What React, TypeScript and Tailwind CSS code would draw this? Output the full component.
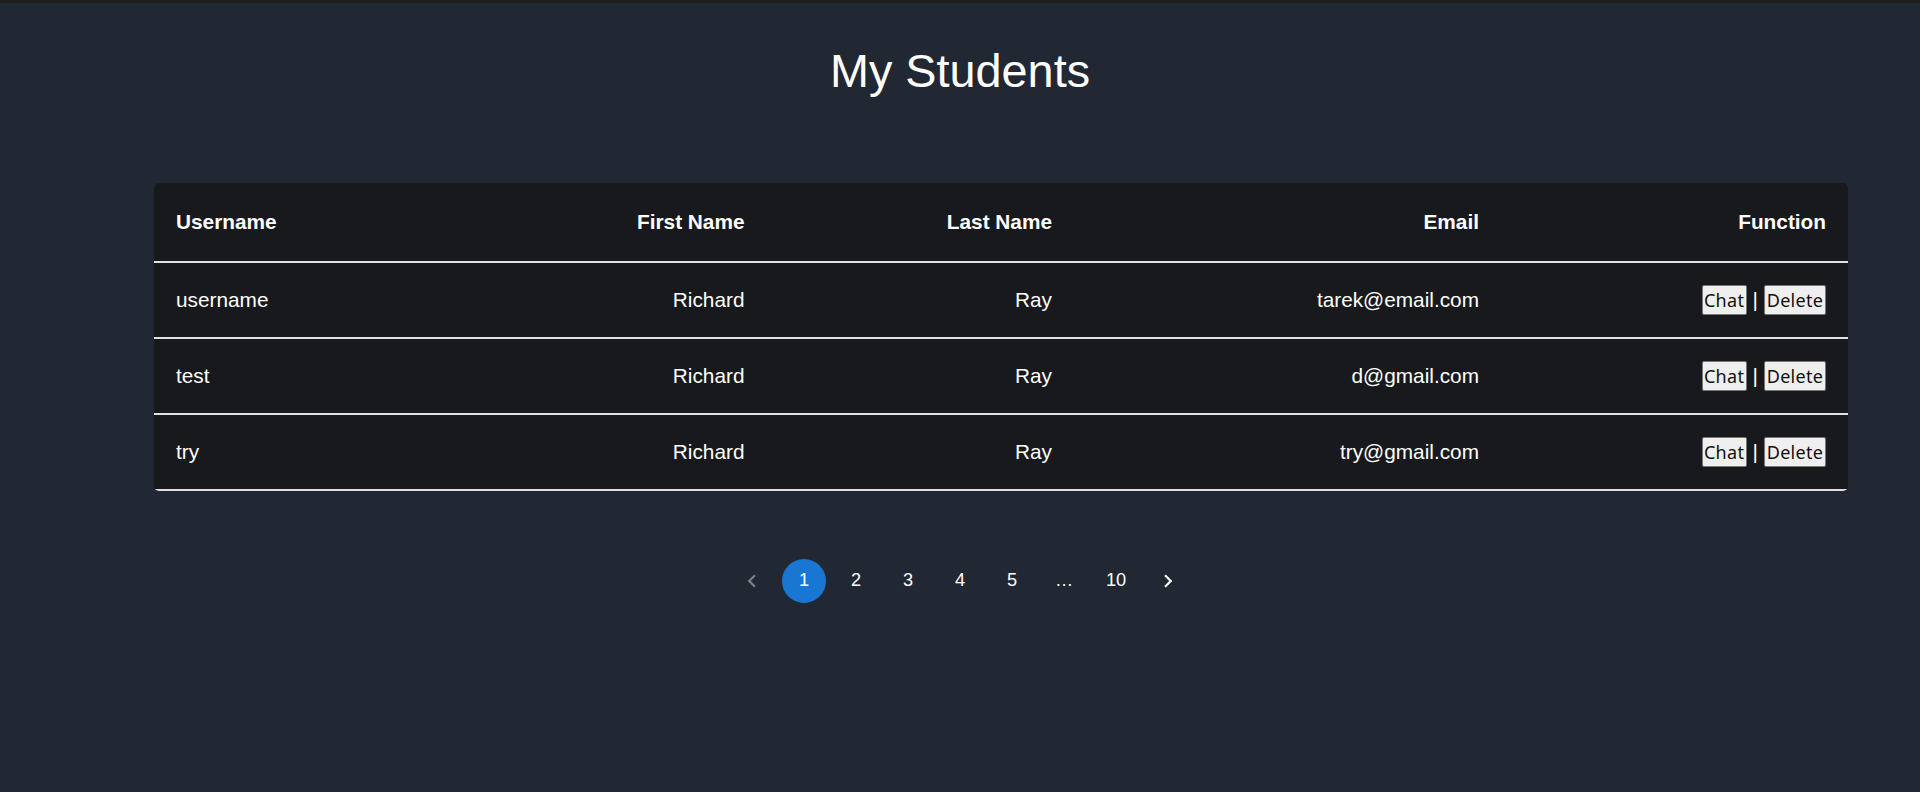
import React from "react";

const rows = [
  { username: "username", first: "Richard", last: "Ray", email: "tarek@email.com" },
  { username: "test", first: "Richard", last: "Ray", email: "d@gmail.com" },
  { username: "try", first: "Richard", last: "Ray", email: "try@gmail.com" },
];

const cols = "grid grid-cols-[300px_312.5px_307.5px_427px_347px]";

function Btn({ children, w }: { children: React.ReactNode; w: string }) {
  return (
    <button
      className={`${w} h-[30px] flex items-center justify-center bg-[#efefef] border border-[#767676] rounded-[2px] text-[#111] text-[18px] tracking-[0.3px] leading-none`}
      style={{ fontFamily: '"Noto Sans", "Open Sans", sans-serif' }}
    >
      {children}
    </button>
  );
}

export default function App() {
  return (
    <div
      className="min-h-screen bg-[#222833] text-white"
      style={{ fontFamily: '"Liberation Sans", Arial, sans-serif' }}
    >
      <div className="h-[3px] bg-[#1e1e1e]" />
      <h1 className="mt-[41px] text-center text-[46.8px] leading-[54px] font-normal">My Students</h1>

      <div className="mt-[85px] ml-[154px] w-[1694px] bg-[#18191d] rounded-[5px] overflow-hidden">
        <div className={`${cols} h-[80px] border-b-2 border-[#e0e0e0] items-center text-[20.8px] font-bold`}>
          <div className="px-[22px] text-left">Username</div>
          <div className="px-[22px] text-right">First Name</div>
          <div className="px-[22px] text-right">Last Name</div>
          <div className="px-[22px] text-right">Email</div>
          <div className="px-[22px] text-right">Function</div>
        </div>
        {rows.map((r) => (
          <div
            key={r.username}
            className={`${cols} h-[76px] border-b-2 border-[#e0e0e0] items-center text-[20.8px]`}
          >
            <div className="px-[22px] text-left">{r.username}</div>
            <div className="px-[22px] text-right">{r.first}</div>
            <div className="px-[22px] text-right">{r.last}</div>
            <div className="px-[22px] text-right">{r.email}</div>
            <div className="px-[22px] flex justify-end items-center">
              <Btn w="w-[45px]">Chat</Btn>
              <span className="mx-[6px] leading-none">|</span>
              <Btn w="w-[62px]">Delete</Btn>
            </div>
          </div>
        ))}
      </div>

      <nav className="mt-[68px] flex justify-center">
        <ul className="flex items-center gap-[8px] text-[18.2px]">
          <li className="w-[44px] h-[44px] flex items-center justify-center opacity-40">
            <svg width="26" height="26" viewBox="0 0 24 24" fill="currentColor">
              <path d="M15.41 7.41 14 6l-6 6 6 6 1.41-1.41L10.83 12z" />
            </svg>
          </li>
          <li className="w-[44px] h-[44px] rounded-full bg-[#1976d2] flex items-center justify-center">1</li>
          {["2", "3", "4", "5"].map((n) => (
            <li key={n} className="w-[44px] h-[44px] flex items-center justify-center">
              {n}
            </li>
          ))}
          <li className="w-[44px] h-[44px] flex items-center justify-center">…</li>
          <li className="w-[44px] h-[44px] flex items-center justify-center">10</li>
          <li className="w-[44px] h-[44px] flex items-center justify-center">
            <svg width="26" height="26" viewBox="0 0 24 24" fill="currentColor">
              <path d="M10 6 8.59 7.41 13.17 12l-4.58 4.59L10 18l6-6z" />
            </svg>
          </li>
        </ul>
      </nav>
    </div>
  );
}
